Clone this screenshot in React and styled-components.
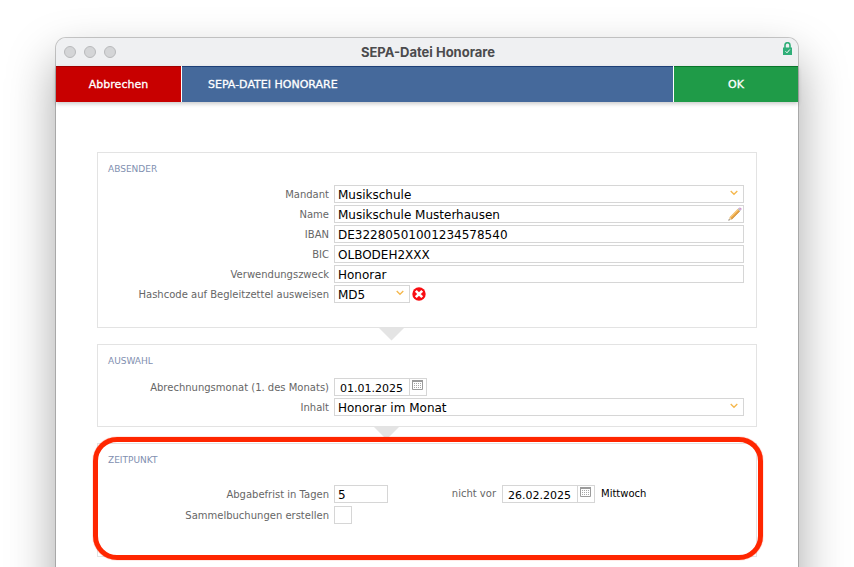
import React, { useState } from "react";
import styled, { createGlobalStyle } from "styled-components";

const GlobalStyle = createGlobalStyle`
    * {
        box-sizing: border-box;
    }

    body {
        margin: 0;
        background-color: #fff;
        font-family: Verdana, "DejaVu Sans", sans-serif;
    }
`;

const Desktop = styled.div`
    height: 100vh;
    padding: 38px 56px 0;
    overflow: hidden;
`;

const Window = styled.div`
    background-color: #fff;
    border-radius: 10px;
    box-shadow: 0 0 0 1px rgba(0, 0, 0, 0.2), 0 22px 48px rgba(0, 0, 0, 0.36);
`;

const TitleBar = styled.div`
    display: grid;
    grid-template-columns: 1fr auto 1fr;
    align-items: center;
    height: 28px;
    padding: 0 6px 0 8px;
    background-color: #eff0f2;
    border-radius: 10px 10px 0 0;
`;

const WindowButtons = styled.div`
    display: flex;
    gap: 8px;
`;

const WindowButton = styled.button`
    width: 12px;
    height: 12px;
    padding: 0;
    border: 1px solid #b9babc;
    border-radius: 50%;
    background-color: #d4d5d7;
`;

const WindowTitle = styled.h1`
    margin: 0;
    font-family: Inter, sans-serif;
    font-size: 13px;
    font-weight: 700;
    line-height: 16px;
    color: #4b4b4d;
`;

const LockIcon = styled.svg`
    justify-self: end;
    align-self: start;
    margin-top: 4px;
`;

const Toolbar = styled.div`
    display: grid;
    grid-template-columns: 125px 1fr 124px;
    column-gap: 1px;
    height: 36px;
    box-shadow: 0 2px 4px rgba(0, 0, 0, 0.2);
`;

const ToolbarButton = styled.button`
    border: none;
    border-top: 1px solid ${props => props.$edge};
    padding: 0;
    background-color: ${props => props.$color};
    color: #fff;
    font-family: inherit;
    font-size: 11px;
    -webkit-text-stroke: 0.3px #fff;
    cursor: pointer;
`;

const ToolbarTitle = styled.div`
    display: flex;
    align-items: center;
    padding-left: 26px;
    border-top: 1px solid #1d3f77;
    background-color: #45699b;
    color: #fff;
    font-size: 11px;
    -webkit-text-stroke: 0.3px #fff;
`;

const Form = styled.form`
    padding: 50px 41px;
`;

const Panel = styled.section`
    position: relative;
    padding: 10px 12px ${props => props.$bottom}px 10px;
    border: 1px solid #e3e3e3;
`;

const PanelTitle = styled.h2`
    margin: 0 0 ${props => props.$gap}px;
    font-size: 9px;
    font-weight: 400;
    line-height: 12px;
    text-transform: uppercase;
    color: #7f8fb0;
`;

const Highlight = styled.div`
    position: absolute;
    inset: -7px -7px -4px -5px;
    border: 5px solid #ff2600;
    border-radius: 24px;
    box-shadow: 0 0 1px #ff2600;
    pointer-events: none;
`;

const Connector = styled.div`
    height: 16px;
    padding-left: ${props => props.$left}px;
`;

const Arrow = styled.svg`
    display: block;
`;

const Rows = styled.div`
    display: grid;
    row-gap: 2px;
`;

const Row = styled.div`
    display: grid;
    grid-template-columns: 221px 1fr;
    column-gap: 5px;
    align-items: center;
`;

const Label = styled.label`
    padding-top: 2px;
    font-size: 10px;
    line-height: 16px;
    text-align: right;
    white-space: nowrap;
    color: #666;
`;

const InlineLabel = styled(Label)`
    width: 103px;
    margin-right: 1px;
    padding-top: 0;
`;

const Controls = styled.div`
    display: flex;
    align-items: center;
    gap: ${props => props.$gap || 5}px;
`;

const TextInput = styled.input`
    width: ${props => props.$width || "100%"};
    height: 18px;
    padding: 2px 3px 0;
    border: 1px solid #d6d6d6;
    border-radius: 0;
    background-color: #fff;
    color: #000;
    font-family: inherit;
    font-size: 12px;
    line-height: 14px;
    outline: none;
`;

const DateInput = styled(TextInput)`
    width: 76px;
    padding: 2px 0 0 5px;
    font-size: 11px;
`;

const Field = styled.div`
    position: relative;
    display: flex;
    width: ${props => props.$width || "100%"};
`;

const SelectInput = styled.select`
    width: 100%;
    height: 18px;
    padding: 2px 16px 0 3px;
    border: 1px solid #d6d6d6;
    border-radius: 0;
    appearance: none;
    background-color: #fff;
    color: #000;
    font-family: inherit;
    font-size: 12px;
    line-height: 14px;
    outline: none;
`;

const Chevron = styled.svg`
    position: absolute;
    top: 5px;
    right: 6px;
    pointer-events: none;
`;

const IconButton = styled.button`
    display: flex;
    padding: 0;
    border: none;
    background: none;
    cursor: pointer;
`;

const EditButton = styled(IconButton)`
    position: absolute;
    top: 2px;
    right: 2px;
`;

const CalendarButton = styled(IconButton)`
    width: 18px;
    height: 18px;
    margin-left: -1px;
    padding: 1px 0 0 2px;
    border: 1px solid #d6d6d6;
`;

const CheckBox = styled.input`
    width: 18px;
    height: 18px;
    margin: 1px 0 0;
    border: 1px solid #d6d6d6;
    appearance: none;
    background-color: #fff;

    &:checked {
        background-color: #45699b;
    }
`;

const Weekday = styled.span`
    padding-left: 1px;
    font-size: 10px;
    line-height: 16px;
    color: #000;
`;

function PanelArrow({ left }) {
    return (
        <Connector $left={left}>
            <Arrow width="25" height="13" viewBox="0 0 25 13">
                <path d="M0 0h25L12.500 12.500z" fill="#e4e4e4" />
            </Arrow>
        </Connector>
    );
}

function Select({ id, width, options }) {
    return (
        <Field $width={width}>
            <SelectInput id={id}>
                {options.map(option => <option key={option}>{option}</option>)}
            </SelectInput>
            <Chevron width="8" height="6" viewBox="0 0 8 6">
                <path d="M0.700 1L4 4.300 7.300 1" fill="none" stroke="#f5b74c" strokeWidth="1.300" />
            </Chevron>
        </Field>
    );
}

function DateField({ id, value, onChange }) {
    return (
        <Field $width="auto">
            <DateInput id={id} type="text" value={value} onChange={onChange} />
            <CalendarButton type="button" aria-label="Kalender">
                <svg width="11" height="10" viewBox="0 0 11 10">
                    <path d="M0.500 0.500h10v9h-10z" fill="#fff" stroke="#9b9b9b" />
                    <path d="M0 0h11v2H0z" fill="#9b9b9b" />
                    <path d="M2 3.500h7M2 5.500h7M2 7.500h7" stroke="#a8a8a8" strokeDasharray="1 1" />
                </svg>
            </CalendarButton>
        </Field>
    );
}

function App() {
    const [values, setValues] = useState({
        name: "Musikschule Musterhausen",
        iban: "DE32280501001234578540",
        bic: "OLBODEH2XXX",
        zweck: "Honorar",
        monat: "01.01.2025",
        frist: "5",
        datum: "26.02.2025",
    });
    const [sammel, setSammel] = useState(false);

    const handleChange = (event) => {
        setValues({ ...values, [event.target.id]: event.target.value });
    };

    return (
        <Desktop>
            <GlobalStyle />
            <Window>
                <TitleBar>
                    <WindowButtons>
                        <WindowButton type="button" aria-label="Schließen" />
                        <WindowButton type="button" aria-label="Minimieren" />
                        <WindowButton type="button" aria-label="Vergrößern" />
                    </WindowButtons>
                    <WindowTitle>SEPA-Datei Honorare</WindowTitle>
                    <LockIcon width="9" height="13" viewBox="0 0 9 13">
                        <path d="M2 6V3.200a2.500 2.500 0 0 1 5 0V6" fill="none" stroke="#2fae78" strokeWidth="1.600" />
                        <path d="M0 5.500h9V13H0z" fill="#2fae78" />
                        <path d="M2.500 9.300L4 10.800 6.800 7.500" fill="none" stroke="#fff" />
                    </LockIcon>
                </TitleBar>
                <Toolbar>
                    <ToolbarButton type="button" $color="#c80000" $edge="#a00000">Abbrechen</ToolbarButton>
                    <ToolbarTitle>SEPA-DATEI HONORARE</ToolbarTitle>
                    <ToolbarButton type="submit" form="sepa" $color="#1f9b48" $edge="#08752a">OK</ToolbarButton>
                </Toolbar>
                <Form id="sepa" onSubmit={(event) => event.preventDefault()}>
                    <Panel $bottom={24}>
                        <PanelTitle $gap={10}>Absender</PanelTitle>
                        <Rows>
                            <Row>
                                <Label htmlFor="mandant">Mandant</Label>
                                <Select id="mandant" options={["Musikschule"]} />
                            </Row>
                            <Row>
                                <Label htmlFor="name">Name</Label>
                                <Field>
                                    <TextInput id="name" value={values.name} onChange={handleChange} />
                                    <EditButton type="button" aria-label="Bearbeiten">
                                        <svg width="14" height="14" viewBox="0 0 14 14">
                                            <path d="M0.500 13.500L1.600 10.200 3.800 12.400z" fill="#e9cfa6" />
                                            <path d="M1.600 10.200L9.700 2.100 11.900 4.300 3.800 12.400z" fill="#eda63f" />
                                            <path d="M1.600 10.200L9.700 2.100 10.500 2.900 2.400 11z" fill="#f8cd86" />
                                            <path d="M3.300 11.900L11.400 3.800 11.900 4.300 3.800 12.400z" fill="#c8924a" />
                                            <path d="M9.700 2.100L10.700 1.100 12.900 3.300 11.900 4.300z" fill="#b9b9c0" />
                                            <path d="M10.700 1.100Q11.700 0 13 1T12.900 3.300z" fill="#cf9bd0" />
                                            <path d="M0.300 13.700L0.900 12 2 13.100z" fill="#777" />
                                        </svg>
                                    </EditButton>
                                </Field>
                            </Row>
                            <Row>
                                <Label htmlFor="iban">IBAN</Label>
                                <TextInput id="iban" value={values.iban} onChange={handleChange} />
                            </Row>
                            <Row>
                                <Label htmlFor="bic">BIC</Label>
                                <TextInput id="bic" value={values.bic} onChange={handleChange} />
                            </Row>
                            <Row>
                                <Label htmlFor="zweck">Verwendungszweck</Label>
                                <TextInput id="zweck" value={values.zweck} onChange={handleChange} />
                            </Row>
                            <Row>
                                <Label htmlFor="hashcode">Hashcode auf Begleitzettel ausweisen</Label>
                                <Controls $gap={2}>
                                    <Select id="hashcode" width="76px" options={["MD5"]} />
                                    <IconButton type="button" aria-label="Entfernen">
                                        <svg width="14" height="14" viewBox="0 0 14 14">
                                            <circle cx="7" cy="7" r="6.700" fill="#f90d12" />
                                            <path d="M3.800 3.800l6.400 6.400M10.200 3.800l-6.400 6.400" stroke="#fff" strokeWidth="2.600" />
                                        </svg>
                                    </IconButton>
                                </Controls>
                            </Row>
                        </Rows>
                    </Panel>
                    <PanelArrow left={282} />
                    <Panel $bottom={10}>
                        <PanelTitle $gap={11}>Auswahl</PanelTitle>
                        <Rows>
                            <Row>
                                <Label htmlFor="monat">Abrechnungsmonat (1. des Monats)</Label>
                                <DateField id="monat" value={values.monat} onChange={handleChange} />
                            </Row>
                            <Row>
                                <Label htmlFor="inhalt">Inhalt</Label>
                                <Select id="inhalt" options={["Honorar im Monat"]} />
                            </Row>
                        </Rows>
                    </Panel>
                    <PanelArrow left={277} />
                    <Panel $bottom={32}>
                        <PanelTitle $gap={19}>Zeitpunkt</PanelTitle>
                        <Rows>
                            <Row>
                                <Label htmlFor="frist">Abgabefrist in Tagen</Label>
                                <Controls>
                                    <TextInput id="frist" $width="54px" value={values.frist} onChange={handleChange} />
                                    <InlineLabel htmlFor="datum">nicht vor</InlineLabel>
                                    <DateField id="datum" value={values.datum} onChange={handleChange} />
                                    <Weekday>Mittwoch</Weekday>
                                </Controls>
                            </Row>
                            <Row>
                                <Label htmlFor="sammel">Sammelbuchungen erstellen</Label>
                                <CheckBox
                                    id="sammel"
                                    type="checkbox"
                                    checked={sammel}
                                    onChange={(event) => setSammel(event.target.checked)}
                                />
                            </Row>
                        </Rows>
                        <Highlight />
                    </Panel>
                </Form>
            </Window>
        </Desktop>
    );
}

export default App;
